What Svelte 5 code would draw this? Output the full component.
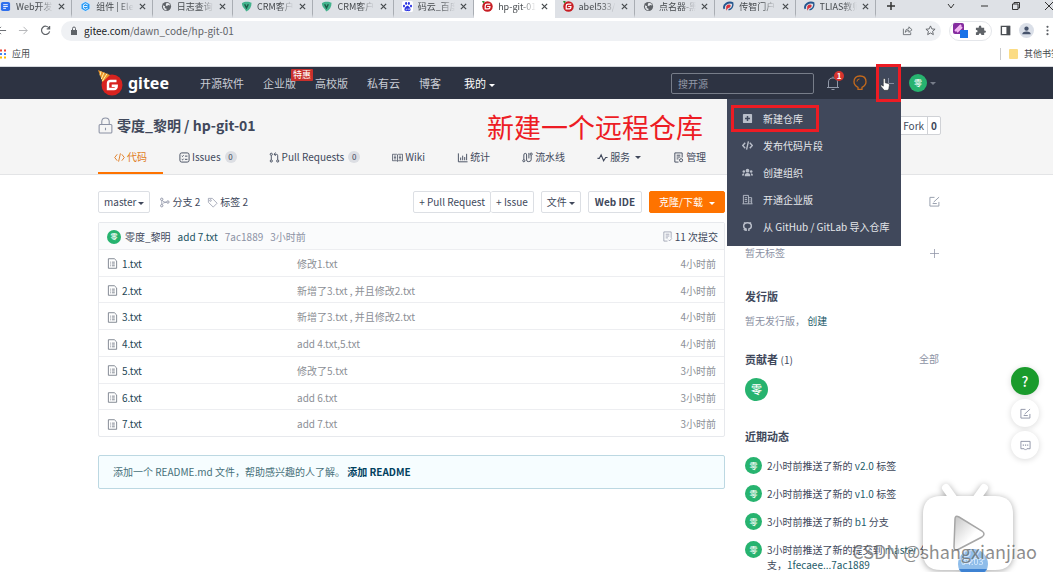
<script>
  const tabs = [
    { title: 'Web开发', icon: 'doc' },
    { title: '组件 | Ele', icon: 'element' },
    { title: '日志查询', icon: 'globe' },
    { title: 'CRM客户', icon: 'vue' },
    { title: 'CRM客户', icon: 'vue' },
    { title: '码云_百度', icon: 'paw' },
    { title: 'hp-git-01', icon: 'gitee', active: true },
    { title: 'abel533/', icon: 'gitee' },
    { title: '点名器-黑', icon: 'globe' },
    { title: '传智门户', icon: 'swirl' },
    { title: 'TLIAS教师', icon: 'swirl' },
  ];

  const repoTabs = [
    { label: '代码', icon: 'code', active: true },
    { label: 'Issues', icon: 'issues', count: 0 },
    { label: 'Pull Requests', icon: 'pull', count: 0 },
    { label: 'Wiki', icon: 'wiki' },
    { label: '统计', icon: 'chart' },
    { label: '流水线', icon: 'pipeline' },
    { label: '服务', icon: 'pulse', caret: true },
    { label: '管理', icon: 'manage' },
  ];

  const menu = [
    { label: '新建仓库', icon: 'plusbox' },
    { label: '发布代码片段', icon: 'codebold' },
    { label: '创建组织', icon: 'users' },
    { label: '开通企业版', icon: 'building' },
    { label: '从 GitHub / GitLab 导入仓库', icon: 'github' },
  ];

  const files = [
    { name: '1.txt', message: '修改1.txt', time: '4小时前' },
    { name: '2.txt', message: '新增了3.txt , 并且修改2.txt', time: '4小时前' },
    { name: '3.txt', message: '新增了3.txt , 并且修改2.txt', time: '4小时前' },
    { name: '4.txt', message: 'add 4.txt,5.txt', time: '4小时前' },
    { name: '5.txt', message: '修改了5.txt', time: '3小时前' },
    { name: '6.txt', message: 'add 6.txt', time: '3小时前' },
    { name: '7.txt', message: 'add 7.txt', time: '3小时前' },
  ];

  const events = [
    { before: '2小时前推送了新的', link: 'v2.0', after: '标签' },
    { before: '2小时前推送了新的', link: 'v1.0', after: '标签' },
    { before: '3小时前推送了新的', link: 'b1', after: '分支' },
    { before: '3小时前推送了新的提交到', link: 'master', after: '分支，', hash: '1fecaee...7ac1889' },
  ];

  let search = $state('');
</script>

{#snippet favicon(name)}
  <svg class="favicon" viewBox="0 0 12 12" aria-hidden="true">
    {#if name === 'doc'}
      <rect x="1" y="1" width="10" height="10" rx="2" fill="#2f6fed" />
      <path d="M3.500 4h5M3.500 6h5M3.500 8h3" stroke="#fff" />
    {:else if name === 'element'}
      <circle cx="6" cy="6" r="5.500" fill="#c9e6ff" />
      <path d="M6 1l4.300 2.500v5L6 11 1.700 8.500v-5z" fill="#2196f3" />
      <path d="M8.500 4.300L6 3 3.700 4.300v3.400L6 9l2.500-1.300M4.500 6H8" stroke="#fff" fill="none" />
    {:else if name === 'globe'}
      <circle cx="6" cy="6" r="5" fill="#5f6368" />
      <path d="M2 4.500l2.500 1.200L4 7.500l2 1v1.800C3.500 10 2 8 2 4.500zM6 1.800l3 .8 1 2.400-2.300-.6-1.200 1.200L5 4.500z" fill="#e6e8ec" />
    {:else if name === 'vue'}
      <path d="M1 2.500C4 0 9 .5 11.500 2 11.500 7 9.500 10 5.500 11.500 5.500 9 1 7.500 1 2.500z" fill="#43b28c" />
      <path d="M4 3.500l2 4 2-4" stroke="#1c5947" stroke-width="1.500" fill="none" />
    {:else if name === 'paw'}
      <rect width="12" height="12" rx="2" fill="#fff" />
      <g fill="#2932e1">
        <ellipse cx="2.200" cy="5.500" rx="1.100" ry="1.500" />
        <ellipse cx="4.500" cy="2.800" rx="1.100" ry="1.600" />
        <ellipse cx="7.500" cy="2.800" rx="1.100" ry="1.600" />
        <ellipse cx="9.800" cy="5.500" rx="1.100" ry="1.500" />
        <path d="M6 5.200C4.500 5.200 2.500 8 2.700 9.500c.3 2 2 1.500 3.300 1.500s3 .5 3.300-1.500C9.500 8 7.500 5.200 6 5.200z" />
      </g>
      <path d="M4.500 8.500v1.200h1V8M7 8v1.700h1.200V8" stroke="#fff" stroke-width=".5" fill="none" />
    {:else if name === 'gitee'}
      <circle cx="6" cy="6" r="5.700" fill="#c71d23" />
      <path d="M9 3.500H5.500Q3.500 3.500 3.500 5.500v3H7Q8.700 8.500 8.700 6H5.600" stroke="#fff" stroke-width="1.300" fill="none" />
      <path d="M0 0h3L1.500 3z" fill="#2d8f37" />
    {:else}
      <path d="M1.500 8.500C-.5 4 6 0 11 2.500" stroke="#24568f" stroke-width="2" fill="none" />
      <path d="M6 9.500C9 9 11.500 6 10.500 2.500" stroke="#24568f" stroke-width="1.500" fill="none" />
      <path d="M3.500 10.500V6Q4.500 3.500 7.500 4 9.500 5 7 7.300L5.500 7.500z" fill="#d8323c" />
    {/if}
  </svg>
{/snippet}

{#snippet icon(name)}
  <svg class="icon" viewBox="0 0 12 12" fill="none" stroke="currentColor" aria-hidden="true">
    {#if name === 'code'}
      <path d="M3.500 2.500L.8 6l2.700 3.500M8.500 2.500L11.200 6 8.500 9.500M7 1.500l-2 9" />
    {:else if name === 'codebold'}
      <path d="M3.500 3L.8 6l2.700 3M8.500 3l2.700 3-2.700 3M7 1.500l-2 9" stroke-width="1.500" />
    {:else if name === 'issues'}
      <rect x="1" y="1" width="10" height="10" rx="2" />
      <path d="M3 4.300l.8.700L5 3.500M3 8l.8.700L5 7.300M6.500 4.500h2.700M6.500 8h2.700" />
    {:else if name === 'pull'}
      <circle cx="2.500" cy="2.500" r="1.200" />
      <circle cx="2.500" cy="9.800" r="1.200" />
      <circle cx="9.500" cy="9.800" r="1.200" />
      <path d="M2.500 4v4.500M9.500 8.500V4q0-1.500-1.500-1.500H5.500M7.300.7L5.500 2.500l1.800 1.800" />
    {:else if name === 'wiki'}
      <path d="M.5 2.500h4.500l1 .7 1-.7h4.500v7H7l-1 .7-1-.7H.5zM6 3v7M2 4.500h2.500M2 6h2.500M2 7.500h2.500M7.500 4.500H10M7.500 6H10M7.500 7.500H10" stroke-width=".8" />
    {:else if name === 'chart'}
      <path d="M1.500 1.500v9.200h10M4 9V6M6.200 9V4M8.400 9V5.500M10.500 9V2" />
    {:else if name === 'pipeline'}
      <circle cx="2" cy="9.500" r="1.200" />
      <circle cx="10" cy="2.300" r="1.200" />
      <path d="M2 8V3.200Q2 1.500 3.700 1.500 5 1.500 5 3.200v5.500Q5 10.500 7 10.500q3 0 3-2V3.700M7.500 1v6" />
    {:else if name === 'pulse'}
      <path d="M.5 7h2l2-4 2.700 6.500L9.500 6h2" stroke-width="1.200" />
    {:else if name === 'manage'}
      <path d="M10 6V1H2v10h4M4 3.500h4M4 5.500h4M4 7.500h2" />
      <circle cx="8.800" cy="9" r="1.700" />
    {:else if name === 'branch'}
      <circle cx="3" cy="2.500" r="1.300" />
      <circle cx="3" cy="9.500" r="1.300" />
      <circle cx="9.700" cy="5.500" r="1.300" />
      <path d="M3 4v4M3.500 3.700Q5 6 8.300 5.700M3.500 8q1.200-2.200 4.500-2.300" stroke-width=".8" />
    {:else if name === 'tag'}
      <path d="M1.500 1.500h4.300L11 6.800 6.800 11 1.500 5.800z" stroke-width=".8" />
      <circle cx="3.800" cy="3.800" r=".9" stroke-width=".8" />
    {:else if name === 'file'}
      <path d="M1.500.8H8l2.500 2.400v8h-9zM3.500 4.500h1M5.500 4.500h3M3.500 6.500h1M5.500 6.500h3M3.500 8.500h1M5.500 8.500h3" stroke-width=".9" />
    {:else if name === 'commits'}
      <path d="M6 11H2V1h8v6.500M4 3.500h4M4 5.500h4M4 7.500h2.500M7 9.500l1.300 1.300 2.500-2.800" stroke-width=".8" />
    {:else if name === 'edit'}
      <path d="M6 1.500H1v9.500h9.800V6.500M4 8.200h4.500M5 6.700l6-5.500" />
    {:else if name === 'plus'}
      <path d="M6 0v12M0 6h12" />
    {:else if name === 'plusbox'}
      <rect x="1" y="1" width="10" height="10" rx="1" fill="currentColor" stroke="none" />
      <path d="M6 3.300v5.400M3.300 6h5.400" stroke="#40485b" stroke-width="1.600" />
    {:else if name === 'users'}
      <g fill="currentColor" stroke="none">
        <circle cx="6" cy="4" r="2" />
        <circle cx="2" cy="5" r="1.400" />
        <circle cx="10" cy="5" r="1.400" />
        <path d="M3 10q-.3-3.500 3-3.500T9 10zM0 9.300q-.2-2.500 2.300-2.500Q2.300 7.800 2.200 9.300zM12 9.300q.2-2.500-2.300-2.500.1 1 .1 2.500z" />
      </g>
    {:else if name === 'building'}
      <path d="M1.500 10.500v-9H7v9M7 4h3.500v6.500M.5 10.700h11M3 4h2.500M3 6h2.500M3 8h2.500M8 6.500h1.500M8 8.500h1.500" />
    {:else if name === 'github'}
      <path d="M4.500 11V8.800Q1.800 8.300 1.800 5.500 1.800 1.800 6 1.800t4.200 3.700q0 2.800-2.700 3.300V11M4.500 9.800Q3 10.200 2 8.800" stroke-width="1.600" />
      <path d="M2 1l2 1-1.700 2zM10 1L8 2l1.700 2z" fill="currentColor" stroke="none" />
    {:else if name === 'chat'}
      <path d="M1 1.500h10v8H7.500L6 11 4.500 9.500H1z" />
      <path d="M3 5.500h1.300M5.400 5.500h1.300M7.800 5.500H9" stroke-width="1.300" />
    {/if}
  </svg>
{/snippet}

<div class="window">
  <div class="tabstrip">
    <div class="tabs">
      {#each tabs as tab}
        <div class="tab" class:active={tab.active}>
          {@render favicon(tab.icon)}
          <span class="tab-title">{tab.title}</span>
          <button class="tab-close" aria-label="关闭 {tab.title}">
            <svg viewBox="0 0 8 8"><path d="M1 1l6 6M7 1L1 7" stroke="currentColor" stroke-width="1.400" /></svg>
          </button>
        </div>
      {/each}
    </div>
    <div class="window-buttons">
      <button aria-label="新标签页"><svg viewBox="0 0 10 10"><path d="M5 1v8M1 5h8" stroke-width="1.500" /></svg></button>
      <button class="spaced" aria-label="搜索标签页"><svg viewBox="0 0 10 10"><path d="M2 3l3 4 3-4" /></svg></button>
      <button aria-label="最小化"><svg viewBox="0 0 10 10"><path d="M2 5h7" /></svg></button>
      <button aria-label="还原"><svg viewBox="0 0 10 10"><path d="M1.500 3h5.500v5.500H1.500zM3 3V1.500h5.500V7H7" /></svg></button>
      <button aria-label="关闭"><svg viewBox="0 0 10 10"><path d="M2 1l8 8M10 1L2 9" /></svg></button>
    </div>
  </div>

  <div class="toolbar">
    <div class="nav-buttons">
      <button aria-label="后退"><svg viewBox="0 0 12 12"><path d="M11 6H1.500M5.500 2L1.500 6l4 4" /></svg></button>
      <button class="dim" aria-label="前进"><svg viewBox="0 0 12 12"><path d="M1 6h9M6 2l4 4-4 4" /></svg></button>
      <button aria-label="重新加载"><svg viewBox="0 0 12 12"><path d="M10 3.500A4.500 4.500 0 1 0 10.500 7M10.500 1v3.200H7.300" stroke-width="1.300" /></svg></button>
    </div>
    <div class="address">
      <svg class="small-lock" viewBox="0 0 8 10"><rect x="1" y="4" width="6" height="5" fill="#5f6368" /><path d="M2.500 4V2.500Q2.500 1 4 1t1.500 1.500V4" stroke="#5f6368" fill="none" /></svg>
      <span class="url">gitee.com<span>/dawn_code/hp-git-01</span></span>
      <button aria-label="分享"><svg viewBox="0 0 12 12"><path d="M1.500 4v6.500h8V8M3.500 8q0-4 4-4V2L11 5.200 7.500 8V6Q5 6 3.500 8z" stroke-width=".9" /></svg></button>
      <button aria-label="收藏"><svg viewBox="0 0 12 12"><path d="M6 1l1.500 3.300 3.500.3-2.700 2.300.8 3.600L6 8.700l-3.100 1.800.8-3.600L1 4.600l3.500-.3z" /></svg></button>
    </div>
    <div class="extensions">
      <svg viewBox="0 0 16 16"><rect width="11" height="11" rx="2" fill="#842c9f" /><path d="M2 8l6-6M4 9l5-5" stroke="#f4b8f4" stroke-width="2" /><rect x="7" y="7" width="8" height="8" fill="#1a73e8" /></svg>
      <svg viewBox="0 0 12 12"><path d="M1 3h3q0-2.500 1.500-2.500T7 3h3v3q2 0 2 1.300T10 8.500V11H7Q6.800 9 5.500 9T4 11H1V8q1.800 0 1.800-1.300T1 5.500z" fill="#5f6368" /></svg>
    </div>
    <svg class="tool-icon" viewBox="0 0 12 12"><path d="M1.500 1.500h9v9h-9z" fill="none" stroke="#4b4f54" stroke-width="1.500" /><path d="M7 1h4v10H7z" fill="#4b4f54" /></svg>
    <svg class="profile" viewBox="0 0 16 16"><circle cx="8" cy="8" r="8" fill="#dadfe8" /><circle cx="8" cy="6" r="2.300" fill="#46536c" /><path d="M3.500 12q0-3 4.500-3t4.500 3z" fill="#46536c" /></svg>
    <svg class="tool-icon" viewBox="0 0 12 12" fill="#5f6368"><circle cx="6" cy="2" r="1.200" /><circle cx="6" cy="6" r="1.200" /><circle cx="6" cy="10" r="1.200" /></svg>
  </div>

  <div class="bookmarks">
    <a href="#apps">
      <svg class="apps" viewBox="0 0 10 10"><path d="M0 1.500h10" stroke="#ea4335" stroke-width="2" stroke-dasharray="2 2" /><path d="M0 5h10" stroke="#4285f4" stroke-width="2" stroke-dasharray="2 2" /><path d="M0 8.500h10" stroke="#fbbc05" stroke-width="2" stroke-dasharray="2 2" /></svg>
      应用
    </a>
    <a class="others" href="#bookmarks"><i class="folder"></i>其他书签</a>
  </div>

  <header class="site-header">
    <a class="logo" href="#gitee">
      <svg viewBox="0 0 26 26" aria-hidden="true">
        <circle cx="14" cy="15" r="10.500" fill="#d8231f" />
        <path d="M18.500 11h-6Q10 11 10 13.500V19h6q2.700 0 2.700-3.200h-5" stroke="#fff" stroke-width="2.400" fill="none" />
        <path d="M0 0l12 5-7.500 7z" fill="#e9952b" />
        <path d="M3 1.300l-1 4M6 2.500L3.300 9M9 3.700l-4.700 7.500" stroke="#fff1a8" />
      </svg>
      gitee
    </a>
    <nav class="site-nav">
      <a href="#explore">开源软件</a>
      <a class="badged" href="#enterprise">企业版<em>特惠</em></a>
      <a href="#education">高校版</a>
      <a href="#private">私有云</a>
      <a href="#blog">博客</a>
    </nav>
    <a class="mine" href="#mine">我的<i class="caret"></i></a>
    <input class="search" type="text" placeholder="搜开源" aria-label="搜开源" bind:value={search} />
    <button class="bell" aria-label="通知">
      <svg viewBox="0 0 14 16"><path d="M1 12.500h12M2.500 12V7Q2.500 3 7 3t4.500 4v5M7 3V1.500M5.500 14.500h3" fill="none" stroke="#9299a8" /></svg>
      <b>1</b>
    </button>
    <button class="bulb" aria-label="推荐">
      <svg viewBox="0 0 14 16"><path d="M5 12.300Q1 10.500 1 6.800 1 1 7 1t6 5.800q0 3.700-4 5.500v2H5z" fill="none" stroke="#c56a1c" stroke-width="1.300" /><path d="M4 6.500Q4 4 6.500 4" fill="none" stroke="#c56a1c" /></svg>
    </button>
    <div class="create">
      <button class="create-button" aria-label="新建">{@render icon('plus')}</button>
      <ul class="create-menu">
        {#each menu as item, i}
          <li class:marked={i === 0}><a href="#create">{@render icon(item.icon)}{item.label}</a></li>
        {/each}
      </ul>
      <svg class="pointer" viewBox="0 0 12 16"><path d="M4 8V2q0-1.300 1.200-1.300T6.300 2v4l4 1q1.200.5 1 2l-.8 4-1 2H5L1 10q-.5-1.300.8-1.300L4 10z" fill="#fff" stroke="#222" stroke-width=".6" /></svg>
    </div>
    <span class="avatar me">零</span><i class="caret dim-caret"></i>
  </header>

  <section class="repo-header">
    <h1>
      <svg class="lock" viewBox="0 0 14 16"><rect x="1" y="7" width="12" height="8" rx="1" /><path d="M3.500 7V4.500Q3.500 1 7 1t3.500 3.500V7M7 10v2.500" /></svg>
      零度_黎明 / hp-git-01
    </h1>
    <div class="fork"><button>Fork</button><b>0</b></div>
    <nav class="repo-tabs">
      {#each repoTabs as tab}
        <a class:active={tab.active} href="#tab">
          {@render icon(tab.icon)}<span>{tab.label}</span>
          {#if tab.count !== undefined}<small>{tab.count}</small>{/if}
          {#if tab.caret}<i class="caret"></i>{/if}
        </a>
      {/each}
    </nav>
    <p class="note">新建一个远程仓库</p>
  </section>

  <main>
    <div class="code">
      <div class="actions">
        <button class="btn">master<i class="caret"></i></button>
        <div class="counts">
          <a href="#branches">{@render icon('branch')}分支 2</a>
          <a href="#tags">{@render icon('tag')}标签 2</a>
        </div>
        <div class="group">
          <button class="btn">+ Pull Request</button><button class="btn">+ Issue</button>
        </div>
        <button class="btn">文件<i class="caret"></i></button>
        <button class="btn strong">Web IDE</button>
        <button class="btn clone">克隆/下载<i class="caret"></i></button>
      </div>

      <div class="files">
        <div class="commit">
          <span class="avatar tiny">零</span>
          <span>零度_黎明</span>
          <a href="#commit">add 7.txt</a>
          <span class="muted">7ac1889</span>
          <span class="muted">3小时前</span>
          <span class="total">{@render icon('commits')}11 次提交</span>
        </div>
        <table>
          <tbody>
            {#each files as file}
              <tr>
                <td class="name"><a href="#file">{@render icon('file')}{file.name}</a></td>
                <td>{file.message}</td>
                <td class="time">{file.time}</td>
              </tr>
            {/each}
          </tbody>
        </table>
      </div>

      <div class="readme">添加一个 README.md 文件，帮助感兴趣的人了解。 <a href="#readme">添加 README</a></div>
    </div>

    <aside>
      <button class="edit" aria-label="编辑">{@render icon('edit')}</button>
      <div class="labels">
        <span>暂无标签</span>
        <button aria-label="添加标签">{@render icon('plus')}</button>
      </div>
      <h2>发行版</h2>
      <p class="release">暂无发行版， <a href="#release">创建</a></p>
      <div class="contributors">
        <h2>贡献者 <small>(1)</small></h2>
        <a href="#all">全部</a>
      </div>
      <span class="avatar large">零</span>
      <h2>近期动态</h2>
      <ul class="events">
        {#each events as event}
          <li>
            <span class="avatar">零</span>
            <p>{event.before} <a href="#event">{event.link}</a> {event.after}{#if event.hash}<a href="#diff">{event.hash}</a>{/if}</p>
          </li>
        {/each}
      </ul>
    </aside>
  </main>

  <div class="floating">
    <button class="help" aria-label="帮助">?</button>
    <button aria-label="反馈">{@render icon('edit')}</button>
    <button aria-label="评论">{@render icon('chat')}</button>
  </div>

  <div class="player">
    <svg viewBox="0 0 110 92" aria-hidden="true">
      <defs>
        <linearGradient id="play" x1="0" y1="0" x2="1" y2="1">
          <stop offset="0" stop-color="#c4c4c4" />
          <stop offset=".6" stop-color="#fff" />
        </linearGradient>
      </defs>
      <path d="M33 8l10 14M71 8L61 22" stroke="#fff" stroke-width="8" stroke-linecap="round" />
      <path d="M28 16h54q18 0 18 18v38q0 18-18 18H28q-18 0-18-18V34q0-18 18-18z" fill="#fff" />
      <path d="M42 39q0-4 4-2l23 14q4 3 0 6L46 69q-5 3-5-2z" fill="url(#play)" stroke="#a6a6a6" stroke-width="1.500" />
      <circle cx="60" cy="84" r="15" fill="#8fbdea" />
      <path d="M46 89h28q-2 3-5 5H51q-3-2-5-5z" fill="#3d82d2" />
    </svg>
    <time>04:03</time>
  </div>
  <div class="watermark">CSDN @shangxianjiao</div>
</div>

<style>
  :global(body) {
    background: #fff;
  }

  .window {
    position: relative;
    min-height: 100vh;
    overflow: hidden;
    color: #40485b;
    font: 10px/16px 'Noto Sans CJK SC', sans-serif;
  }

  .window * {
    box-sizing: border-box;
  }

  a {
    color: inherit;
    text-decoration: none;
  }

  button {
    padding: 0;
    border: 0;
    background: none;
    color: inherit;
    font: inherit;
    cursor: pointer;
  }

  h1,
  h2,
  p,
  ul {
    margin: 0;
    padding: 0;
    list-style: none;
  }

  svg {
    display: block;
    flex: none;
  }

  .icon {
    width: 11px;
    height: 11px;
  }

  .caret {
    display: inline-block;
    flex: none;
    margin-left: 3px;
    border: 3px solid transparent;
    border-top-color: currentColor;
    border-bottom: 0;
    vertical-align: middle;
  }

  .avatar {
    display: flex;
    flex: none;
    align-items: center;
    justify-content: center;
    width: 17px;
    height: 17px;
    border-radius: 50%;
    background: #27b36f;
    color: #fff;
    font-size: 8px;
    font-weight: 500;
    line-height: 1;
  }

  /* browser */
  .tabstrip {
    display: flex;
    height: 18px;
    background: #dee1e6;
  }

  .tabs {
    display: flex;
    flex: 1;
    min-width: 0;
    margin-left: -8px;
  }

  .tab {
    display: flex;
    flex: 1;
    align-items: center;
    gap: 5px;
    min-width: 0;
    padding: 0 6px 1px 8px;
    color: #45494d;
    font-size: 9px;
    border-right: 1px solid #a9adb3;
    border-bottom: 4px solid #dee1e6;
  }

  .tab.active {
    background: #fff;
    border-color: #fff;
  }

  .favicon {
    width: 11px;
    height: 11px;
  }

  .tab-title {
    flex: 1;
    overflow: hidden;
    white-space: nowrap;
    mask-image: linear-gradient(90deg, #000 60%, transparent);
  }

  .tab-close svg {
    width: 7px;
    height: 7px;
  }

  .window-buttons {
    display: flex;
    align-items: flex-start;
    justify-content: space-between;
    width: 177px;
    padding: 1px 0 0 10px;
  }

  .window-buttons svg {
    width: 10px;
    height: 10px;
    fill: none;
    stroke: #333;
  }

  .spaced {
    margin-left: 28px;
  }

  .toolbar {
    display: flex;
    align-items: center;
    gap: 8px;
    height: 25px;
  }

  .nav-buttons {
    display: flex;
    gap: 11px;
    width: 57px;
    margin-left: -4px;
  }

  .nav-buttons svg,
  .address button svg {
    width: 11px;
    height: 11px;
    fill: none;
    stroke: #5f6368;
  }

  .dim {
    opacity: 0.5;
  }

  .address {
    display: flex;
    flex: 1;
    align-items: center;
    gap: 12px;
    height: 20px;
    padding: 0 5px 0 9px;
    border-radius: 10px;
    background: #eff1f4;
  }

  .small-lock {
    width: 8px;
    height: 10px;
  }

  .url {
    flex: 1;
    margin-left: -6px;
    color: #202124;
    font-size: 10px;
  }

  .url span {
    color: #5f6368;
  }

  .extensions {
    display: flex;
    align-items: center;
    gap: 6px;
    height: 20px;
    padding: 0 5px 0 3px;
    border: 1px solid #e4e6ea;
    border-radius: 10px;
  }

  .extensions svg {
    width: 11px;
    height: 11px;
  }

  .extensions svg:first-child {
    width: 16px;
    height: 16px;
  }

  .tool-icon {
    width: 11px;
    height: 11px;
  }

  .profile {
    width: 15px;
    height: 15px;
  }

  .bookmarks {
    display: flex;
    align-items: center;
    justify-content: space-between;
    height: 24px;
    padding-bottom: 2px;
    border-bottom: 1px solid #d6d9de;
    color: #45494d;
    font-size: 9px;
    white-space: nowrap;
  }

  .bookmarks a {
    display: flex;
    align-items: center;
    gap: 6px;
  }

  .apps {
    width: 10px;
    height: 10px;
    margin-left: -4px;
  }

  .others {
    margin-right: -7px;
    padding-left: 8px;
    border-left: 1px solid #ccc;
    line-height: 12px;
  }

  .folder {
    width: 9px;
    height: 10px;
    border-radius: 1px;
    background: #fbdc85;
  }

  /* site header */
  .site-header {
    display: flex;
    align-items: center;
    height: 32px;
    padding: 0 117px 0 98px;
    background: #2d3342;
    color: #c9cdd5;
    font-size: 11px;
    white-space: nowrap;
  }

  .logo {
    display: flex;
    align-items: center;
    gap: 4px;
    width: 102px;
    color: #fff;
    font: bold 16px/20px 'Noto Sans', sans-serif;
  }

  .logo svg {
    width: 26px;
    height: 26px;
  }

  .site-nav {
    display: flex;
    gap: 19px;
  }

  .badged {
    position: relative;
  }

  .badged em {
    position: absolute;
    top: -6px;
    left: 28px;
    padding: 0 2px;
    border-radius: 1px;
    background: #c9302c;
    color: #fff;
    font-size: 9px;
    font-style: normal;
    line-height: 12px;
  }

  .mine {
    margin: 0 auto 0 23px;
    color: #fff;
  }

  .search {
    width: 143px;
    height: 21px;
    padding: 0 6px;
    border: 1px solid #777d89;
    border-radius: 2px;
    background: transparent;
    color: #fff;
    font: inherit;
    font-size: 10px;
  }

  .search::placeholder {
    color: #9299a8;
  }

  .bell {
    position: relative;
    margin-left: 12px;
  }

  .bell svg,
  .bulb svg {
    width: 14px;
    height: 16px;
  }

  .bell b {
    position: absolute;
    top: -4px;
    left: 8px;
    width: 10px;
    border-radius: 50%;
    background: #d6342e;
    color: #fff;
    font-size: 8px;
    line-height: 10px;
  }

  .bulb {
    margin: 0 9px 0 13px;
  }

  .create {
    position: relative;
    align-self: stretch;
    width: 25px;
  }

  .create-button {
    position: relative;
    z-index: 3;
    display: flex;
    align-items: center;
    justify-content: center;
    width: 25px;
    height: 38px;
    margin-top: -3px;
    border: 3px solid #ed1c24;
    background: #40485b;
    color: #8c92a4;
  }

  .pointer {
    position: absolute;
    z-index: 4;
    top: 10px;
    left: 4px;
    width: 10px;
    height: 15px;
  }

  .create-menu {
    position: absolute;
    z-index: 2;
    top: 32px;
    right: 0;
    width: 174px;
    padding: 6px 4px;
    background: #40485b;
    color: #e4e6ea;
    font-size: 10px;
  }

  .create-menu li {
    width: max-content;
    height: 27px;
  }

  .create-menu a {
    display: flex;
    align-items: center;
    gap: 10px;
    height: 27px;
    padding-left: 11px;
  }

  .create-menu .icon {
    color: #b9bec9;
  }

  .create-menu .marked {
    padding-right: 16px;
    outline: 3px solid #ed1c24;
    outline-offset: -3px;
  }

  .me {
    width: 18px;
    height: 18px;
    margin-left: 8px;
  }

  .dim-caret {
    color: #777d89;
  }

  /* repository header */
  .repo-header {
    position: relative;
    display: flex;
    flex-wrap: wrap;
    align-items: center;
    justify-content: space-between;
    padding: 12px 112px 0 98px;
    border-bottom: 1px solid #e3e4e6;
    background: #f5f5f5;
  }

  h1 {
    display: flex;
    align-items: center;
    gap: 4px;
    font-size: 14px;
    line-height: 28px;
  }

  .lock {
    width: 15px;
    height: 17px;
    fill: none;
    stroke: #8c92a4;
  }

  .fork {
    display: flex;
    border: 1px solid #d0d2d6;
    border-radius: 2px;
    background: #fff;
    line-height: 17px;
  }

  .fork button {
    width: 43px;
    padding: 0 3px;
    text-align: right;
  }

  .fork b {
    padding: 0 3px;
    border-left: 1px solid #d0d2d6;
  }

  .repo-tabs {
    display: flex;
    width: 100%;
    white-space: nowrap;
  }

  .repo-tabs a {
    display: flex;
    align-items: center;
    gap: 2px;
    height: 35px;
    padding: 3px 16px 0;
    border-bottom: 2px solid transparent;
    font-size: 10px;
  }

  .repo-tabs a.active {
    border-color: #fe7300;
    color: #e07b20;
  }

  .repo-tabs small {
    min-width: 12px;
    margin-left: 2px;
    border-radius: 6px;
    background: #dcdee3;
    font-size: 8px;
    line-height: 12px;
    text-align: center;
  }

  .note {
    position: absolute;
    top: 12px;
    left: 487px;
    color: #ed1c24;
    font-size: 27px;
    line-height: 32px;
  }

  /* content */
  main {
    display: grid;
    grid-template-columns: minmax(0, 1fr) 196px;
    gap: 20px;
    padding: 16px 112px 0 98px;
  }

  .actions {
    display: flex;
    gap: 7px;
    margin-bottom: 9px;
    white-space: nowrap;
  }

  .btn {
    height: 22px;
    padding: 0 5px;
    border: 1px solid #dcdfe4;
    border-radius: 2px;
    background: #fff;
  }

  .btn .caret {
    margin-left: 2px;
  }

  .counts {
    display: flex;
    flex: 1;
    gap: 7px;
    margin-left: 2px;
    line-height: 22px;
  }

  .counts a,
  .total {
    display: flex;
    align-items: center;
    gap: 2px;
  }

  .counts .icon,
  .total .icon {
    color: #8c92a4;
  }

  .group {
    display: flex;
  }

  .group .btn + .btn {
    border-left: 0;
  }

  .strong {
    padding: 0 6px;
    font-weight: bold;
  }

  .clone {
    padding: 0 9px;
    border-color: #fe7300;
    background: #fe7300;
    color: #fff;
  }

  .clone .caret {
    margin-left: 6px;
  }

  .files {
    border: 1px solid #e7e9ed;
    border-radius: 2px;
  }

  .commit {
    display: flex;
    align-items: center;
    gap: 7px;
    height: 26px;
    padding: 1px 6px 0 8px;
    background: #fafbfc;
  }

  .tiny {
    width: 14px;
    height: 14px;
    margin-right: -3px;
    font-size: 7px;
  }

  .commit a {
    color: #1c5463;
  }

  .muted {
    color: #8c92a4;
  }

  .total {
    margin-left: auto;
  }

  table {
    width: 100%;
    height: 187px;
    border-collapse: collapse;
    color: #8c8f96;
  }

  td {
    padding: 2px 8px 0 0;
    border-top: 1px solid #edeef1;
  }

  .name {
    width: 198px;
    padding-left: 8px;
    color: #1f4756;
  }

  .name a {
    display: flex;
    align-items: center;
    gap: 4px;
  }

  .name .icon {
    color: #6c7380;
  }

  .time {
    text-align: right;
  }

  .readme {
    margin-top: 18px;
    padding: 8px 14px;
    border: 1px solid #bcd8e2;
    border-radius: 2px;
    background: #f6fdff;
    color: #47707a;
  }

  .readme a {
    color: #00405e;
    font-weight: bold;
  }

  .edit {
    display: block;
    margin: 5px 1px 38px auto;
    color: #9299a8;
  }

  .labels {
    display: flex;
    align-items: center;
    justify-content: space-between;
    margin-bottom: 27px;
    padding-right: 2px;
    color: #8c92a4;
  }

  .labels .icon {
    width: 9px;
    height: 9px;
  }

  h2 {
    font-size: 11px;
    line-height: 16px;
  }

  h2 small {
    font-size: 10px;
    font-weight: normal;
  }

  .release {
    margin: 9px 0 22px;
    color: #8c92a4;
  }

  .release a,
  .events a {
    color: #1c5b69;
  }

  .contributors {
    display: flex;
    justify-content: space-between;
    padding-right: 2px;
  }

  .contributors a {
    color: #8c92a4;
  }

  .large {
    width: 23px;
    height: 23px;
    margin: 10px 0 27px;
    font-size: 11px;
  }

  .events {
    margin-top: 13px;
  }

  .events li {
    display: flex;
    gap: 5px;
    min-height: 28px;
  }

  .events p {
    width: 166px;
    padding-top: 1px;
    line-height: 15px;
  }

  /* overlays */
  .floating {
    position: absolute;
    top: 367px;
    right: 14px;
    display: grid;
    gap: 4px;
  }

  .floating button {
    display: flex;
    align-items: center;
    justify-content: center;
    width: 28px;
    height: 28px;
    border-radius: 50%;
    background: #fff;
    box-shadow: 0 1px 6px rgba(0, 0, 0, 0.15);
    color: #8c92a4;
  }

  .floating .help {
    background: #1a9b2c;
    color: #fff;
    font-size: 14px;
    font-weight: 500;
  }

  .player {
    position: absolute;
    top: 480px;
    right: 30px;
    width: 110px;
    height: 92px;
    filter: drop-shadow(0 1px 3px rgba(0, 0, 0, 0.35));
  }

  .player time {
    position: absolute;
    top: 76px;
    left: 48px;
    color: #d9ebfc;
    font-size: 9px;
    line-height: 12px;
  }

  .watermark {
    position: absolute;
    top: 539px;
    right: 16px;
    color: rgba(90, 90, 90, 0.7);
    font-size: 18px;
    line-height: 24px;
    text-shadow: 1px 1px 0 rgba(255, 255, 255, 0.6);
  }
</style>
